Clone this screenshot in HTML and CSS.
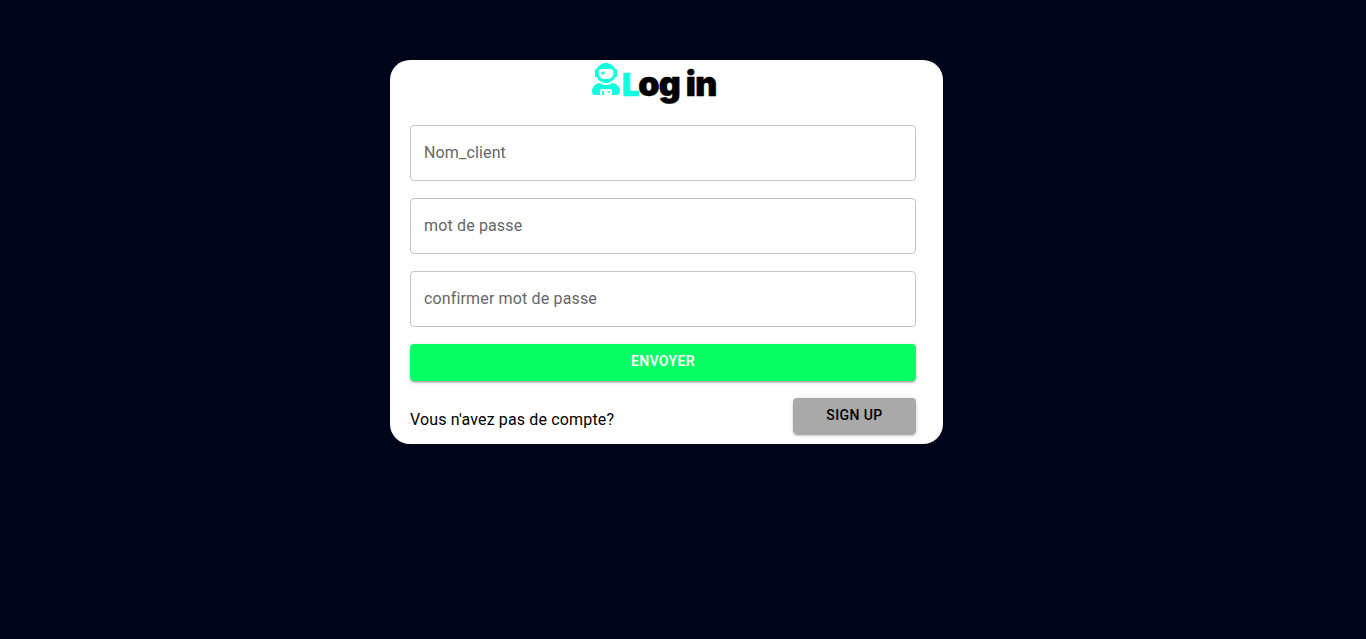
FILE: index.html
```html
<!DOCTYPE html>
<html lang="fr">
<head>
<meta charset="utf-8">
<title>Log in</title>
<link rel="stylesheet" href="styles.css">
</head>
<body>
<main class="card">
  <h1 class="title">
    <svg class="title-icon" viewBox="0 0 448 512" aria-hidden="true"><path fill="currentColor" d="M64 224h13.500c24.700 56.500 80.900 96 146.500 96s121.800-39.500 146.500-96H384c8.800 0 16-7.200 16-16v-96c0-8.800-7.200-16-16-16h-13.500C345.800 39.500 289.600 0 224 0S102.200 39.500 77.500 96H64c-8.800 0-16 7.200-16 16v96c0 8.800 7.200 16 16 16zm40-88c0-22.100 21.500-40 48-40h144c26.500 0 48 17.900 48 40v24c0 53-43 96-96 96h-48c-53 0-96-43-96-96v-24zm72 72l12-36 36-12-36-12-12-36-12 36-36 12 36 12 12 36zm151.600 113.400C297.700 340.700 262.200 352 224 352s-73.700-11.300-103.600-30.600C52.900 328.500 0 385 0 454.400v9.600c0 26.500 21.500 48 48 48h80v-64c0-17.700 14.300-32 32-32h128c17.700 0 32 14.300 32 32v64h80c26.500 0 48-21.500 48-48v-9.600c0-69.400-52.900-125.900-120.400-133zM272 448c-8.800 0-16 7.200-16 16s7.200 16 16 16 16-7.200 16-16-7.200-16-16-16zm-96 0c-8.800 0-16 7.200-16 16v48h32v-48c0-8.800-7.200-16-16-16z"/></svg>
    <span class="title-text"><span class="title-initial">L</span>og in</span>
  </h1>
  <form class="form">
    <input class="field" type="text" placeholder="Nom_client" aria-label="Nom_client">
    <input class="field" type="password" placeholder="mot de passe" aria-label="mot de passe">
    <input class="field" type="password" placeholder="confirmer mot de passe" aria-label="confirmer mot de passe">
    <button class="button button-submit" type="button">Envoyer</button>
    <div class="footer">
      <span class="question">Vous n'avez pas de compte?</span>
      <button class="button button-signup" type="button">Sign up</button>
    </div>
  </form>
</main>
</body>
</html>
```

FILE: styles.css
```css
* {
  box-sizing: border-box;
}

body {
  margin: 0;
  min-height: 100vh;
  padding-top: 60px;
  background: #00051a;
  font-family: Roboto, sans-serif;
}

.card {
  width: 553px;
  height: 384px;
  margin-left: 390px;
  padding: 0 27px 0 20px;
  border-radius: 20px;
  background: #fff;
}

.title {
  display: flex;
  align-items: flex-start;
  height: 65px;
  margin: 0;
  padding: 3px 0 0 182px;
  font: 900 34px/41px Inter, sans-serif;
  color: #000;
}

.title-icon {
  width: 28px;
  height: 32px;
  margin-right: 2px;
  color: #0fffdf;
}

.title-text {
  letter-spacing: -0.8px;
  white-space: nowrap;
  -webkit-text-stroke: 0.6px currentColor;
}

.title-initial {
  margin-right: -0.5px;
  font-size: 31px;
  color: #0fffdf;
}

.form {
  display: flex;
  flex-direction: column;
}

.field {
  height: 56px;
  margin: 0 0 17px;
  padding: 0 13px 2px;
  border: 1px solid #c4c4c4;
  border-radius: 4px;
  background: #fff;
  font: 400 16px/23px Roboto, sans-serif;
  letter-spacing: 0.15px;
}

.field::placeholder {
  color: #666;
  opacity: 1;
}

.button {
  border: 0;
  border-radius: 4px;
  font: 500 14px/24.5px Roboto, sans-serif;
  letter-spacing: 0.4px;
  text-transform: uppercase;
  box-shadow: 0 3px 1px -2px rgba(0, 0, 0, 0.2), 0 2px 2px 0 rgba(0, 0, 0, 0.14), 0 1px 5px 0 rgba(0, 0, 0, 0.12);
}

.button-submit {
  height: 37px;
  padding: 0 0 3px;
  background: #05ff65;
  color: #fff;
  font-weight: 600;
  letter-spacing: 0.35px;
}

.footer {
  display: flex;
  align-items: flex-start;
  justify-content: space-between;
  margin-top: 17px;
}

.question {
  padding-top: 12px;
  font-size: 16px;
  line-height: 19px;
  letter-spacing: 0.15px;
  color: #000;
}

.button-signup {
  width: 123px;
  height: 36px;
  padding: 0 0 2px;
  background: #a9a9a9;
  color: #000;
}
```
